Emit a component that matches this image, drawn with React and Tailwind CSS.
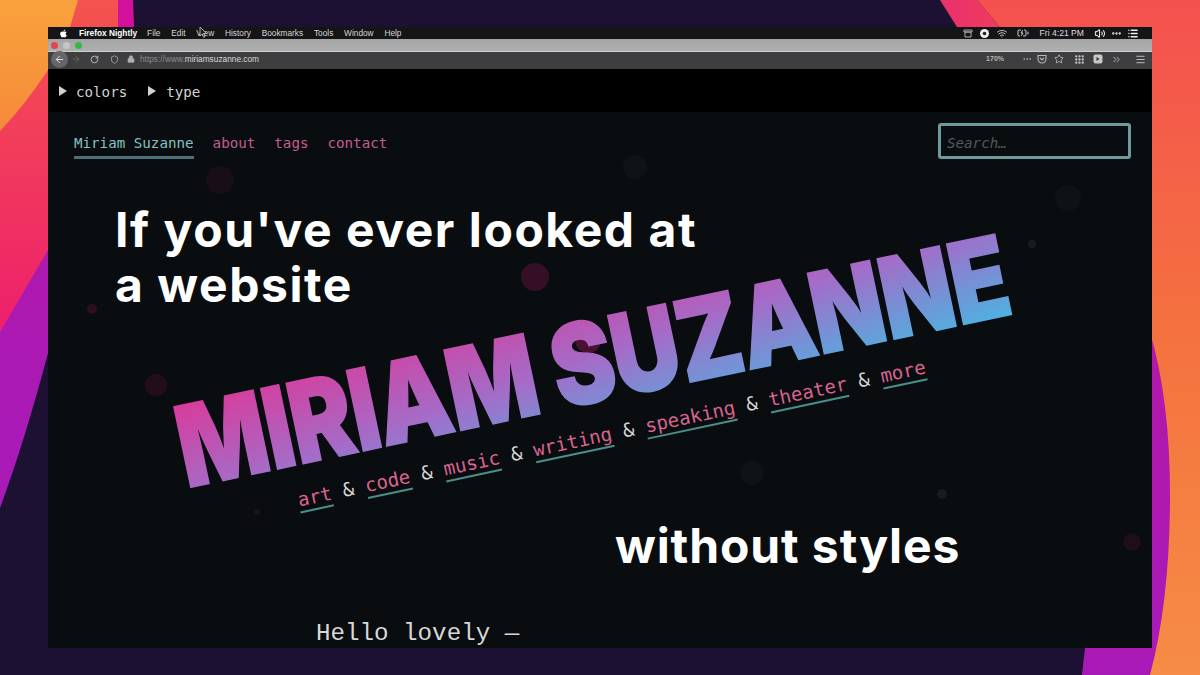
import React from "react";
import { ArrowLeft, ArrowRight, RotateCw, Shield, Lock, Star, Grip, ChevronsRight, Menu, Wifi, Volume2, Ellipsis, BatteryCharging, List } from "lucide-react";
import { FaApple } from "react-icons/fa";

function Wallpaper() {
  return (
    <svg className="absolute inset-0 w-[1200px] h-[675px]" viewBox="0 0 1200 675">
      <defs>
        <linearGradient id="orange" x1="0" y1="0" x2="0" y2="1">
          <stop offset="0" stopColor="#f9a23c" />
          <stop offset="1" stopColor="#f58a3a" />
        </linearGradient>
        <linearGradient id="red" x1="0" y1="0" x2="0" y2="1">
          <stop offset="0" stopColor="#f4534e" />
          <stop offset="1" stopColor="#ee1f6c" />
        </linearGradient>
        <linearGradient id="rightbg" x1="0" y1="0" x2="0" y2="1">
          <stop offset="0" stopColor="#f4514f" />
          <stop offset="0.5" stopColor="#f4723f" />
          <stop offset="1" stopColor="#f68c45" />
        </linearGradient>
        <linearGradient id="pinkred" x1="0" y1="0" x2="1" y2="0">
          <stop offset="0" stopColor="#e8316e" />
          <stop offset="1" stopColor="#f03a5c" />
        </linearGradient>
        <linearGradient id="purple" x1="0" y1="0" x2="0" y2="1">
          <stop offset="0" stopColor="#b318a8" />
          <stop offset="1" stopColor="#a81ab8" />
        </linearGradient>
      </defs>
      <rect width="1200" height="675" fill="#1d1133" />
      <path d="M0 100 L100 40 L48 353 Q25 440 0 508 Z" fill="url(#purple)" />
      <path d="M78 0 L118 0 L118 27 L100 60 L48 250 L0 332 L0 100 Z" fill="url(#red)" />
      <path d="M118 0 L133 0 L134 27 L118 27 Z" fill="#d3109c" />
      <path d="M0 0 L78 0 L70 27 L48 70 Q25 105 0 131 Z" fill="url(#orange)" />
      <path d="M940 0 L977 0 L1000 27 L957 27 Z" fill="url(#pinkred)" />
      <path d="M977 0 L1200 0 L1200 675 L1100 675 L1100 27 L1000 27 Z" fill="url(#rightbg)" />
      <path d="M1150 332 Q1170 400 1170 495 Q1170 600 1150 675 L1082 675 L1085 648 L1140 640 L1140 332 Z" fill="url(#purple)" />
    </svg>
  );
}

function MenuBar() {
  const items = ["File", "Edit", "View", "History", "Bookmarks", "Tools", "Window", "Help"];
  return (
    <div className="relative h-[12px] bg-[#151518] flex items-center text-[8.3px] text-[#d6d6d6] font-['Liberation_Sans',sans-serif]">
      <FaApple className="ml-[11px] w-[9px] h-[9px] text-white" />
      <span className="ml-[11px] font-bold text-white">Firefox Nightly</span>
      <div className="ml-[10px] flex gap-[10.8px]">
        {items.map((t) => <span key={t}>{t}</span>)}
      </div>
      <div className="ml-auto mr-[13px] flex items-center gap-[5px]">
        <svg width="10" height="9" viewBox="0 0 10 9" className="text-[#aaa]"><path d="M1 1h8v2H1zM2 3h6v5H2z" fill="none" stroke="currentColor" strokeWidth="1" /></svg>
        <svg className="ml-[2.5px]" width="9" height="9" viewBox="0 0 9 9"><circle cx="4.5" cy="4.5" r="4.5" fill="#eee" /><circle cx="4.5" cy="4.5" r="1.8" fill="#222" /></svg>
        <Wifi className="ml-[1.5px] w-[12px] h-[11px] text-[#ccc]" strokeWidth={2} />
        <BatteryCharging className="w-[14px] h-[12px] text-[#ccc] ml-[3px]" strokeWidth={2} />
        <span className="ml-[5px] text-[8.6px] font-medium text-[#dcdcdc]">Fri 4:21 PM</span>
        <Volume2 className="w-[12px] h-[11px] text-[#ddd] ml-[5px]" strokeWidth={2.4} />
        <Ellipsis className="w-[11px] h-[11px] text-[#eee]" strokeWidth={3} />
        <List className="w-[12px] h-[11px] text-[#eee]" strokeWidth={3} />
      </div>
    </div>
  );
}

function TitleBar() {
  return (
    <div className="h-[13px] bg-gradient-to-b from-[#a4a4a4] to-[#aeb0b0] border-b border-[#cfcfcf] flex items-center pl-[3px] gap-[5px]">
      <span className="w-[7px] h-[7px] rounded-full bg-[#e8424f]" />
      <span className="w-[7px] h-[7px] rounded-full bg-[#c6c6c6]" />
      <span className="w-[7px] h-[7px] rounded-full bg-[#39b54a]" />
    </div>
  );
}

function ToolBar() {
  return (
    <div className="h-[17px] bg-[#3e3e41] flex items-center pb-[3px] text-[8px] text-[#9a9a9a] font-['Liberation_Sans',sans-serif]">
      <span className="ml-[3px] w-[17px] h-[17px] rounded-full bg-[#66666a] flex items-center justify-center mt-[1px]">
        <ArrowLeft className="w-[11px] h-[11px] text-[#e8e8e8]" strokeWidth={2} />
      </span>
      <ArrowRight className="ml-[3px] w-[10px] h-[10px] text-[#6a6a6a]" />
      <RotateCw className="ml-[9px] w-[9px] h-[9px] text-[#c8c8c8]" strokeWidth={2.2} />
      <Shield className="ml-[11px] w-[9px] h-[9px] text-[#b0b0b0]" strokeWidth={2} />
      <Lock className="ml-[8px] w-[8px] h-[8px] text-[#b0b0b0] fill-[#b0b0b0]" />
      <span className="ml-[5px] text-[8.3px] text-[#8a8a8a]">https://www.<span className="text-[#d8d8d8]">miriamsuzanne.com</span></span>
      <div className="ml-auto mr-[6px] flex items-center">
        <span className="text-[7px] font-bold text-[#b5b5b5]">170%</span>
        <Ellipsis className="ml-[18px] w-[10px] h-[10px] text-[#a0a0a0]" strokeWidth={2.4} />
        <svg className="ml-[5px] text-[#b8b8b8]" width="10" height="10" viewBox="0 0 10 10"><path d="M1 1.5h8v3.5a4 4 0 0 1-8 0zM3 4l2 2 2-2" fill="none" stroke="currentColor" strokeWidth="1.1" /></svg>
        <Star className="ml-[7px] w-[10px] h-[10px] text-[#c0c0c0]" strokeWidth={2} />
        <Grip className="ml-[10px] w-[11px] h-[11px] text-[#d0d0d0]" strokeWidth={3} />
        <svg className="ml-[8px]" width="10" height="10" viewBox="0 0 10 10"><rect x="0.5" y="0.5" width="9" height="9" rx="2" fill="#c8c8c8" /><path d="M3.5 3l3 2-3 2z" fill="#333" /></svg>
        <ChevronsRight className="ml-[8px] w-[11px] h-[11px] text-[#b8b8b8]" strokeWidth={2} />
        <Menu className="ml-[13px] w-[11px] h-[11px] text-[#c8c8c8]" strokeWidth={2} />
      </div>
    </div>
  );
}

const dots = [
  { x: 487, y: 208, r: 14, c: "bg-[#340f26]" },
  { x: 172, y: 111, r: 14, c: "bg-[#1a0e16]" },
  { x: 108, y: 316, r: 11, c: "bg-[#240d1b]" },
  { x: 44, y: 240, r: 5, c: "bg-[#2b0f20]" },
  { x: 984, y: 175, r: 4, c: "bg-[#1a1d20]" },
  { x: 704, y: 404, r: 12, c: "bg-[#101316]" },
  { x: 1020, y: 129, r: 13, c: "bg-[#0f1215]" },
  { x: 1084, y: 473, r: 9, c: "bg-[#1e0e18]" },
  { x: 894, y: 425, r: 5, c: "bg-[#181b1e]" },
  { x: 587, y: 98, r: 12, c: "bg-[#101316]" },
  { x: 209, y: 443, r: 3, c: "bg-[#1e0f1a]" },
];

function Logo() {
  return (
    <svg className="absolute left-0 top-0" width="1104" height="579" viewBox="0 0 1104 579">
      <defs>
        <linearGradient id="logo" gradientUnits="userSpaceOnUse" x1="-510" y1="-42" x2="-491" y2="143">
          <stop offset="0" stopColor="#d83c9c" />
          <stop offset="0.5" stopColor="#a46cc8" />
          <stop offset="1" stopColor="#50b0e0" />
        </linearGradient>
      </defs>
      <circle cx="540" cy="271" r="13" fill="#4a1232" />
      <text
        transform="translate(544 292) rotate(-11.9) scale(.832 1)"
        y="41"
        textAnchor="middle"
        fontFamily="Inter, sans-serif"
        fontWeight="900"
        fontSize="113"
        letterSpacing="-1.5"
        fill="url(#logo)"
        stroke="url(#logo)"
        strokeWidth="1.5"
      >MIRIAM SUZANNE</text>
    </svg>
  );
}

function Page() {
  const links = ["art", "code", "music", "writing", "speaking", "theater", "more"];
  return (
    <div className="relative flex-1 overflow-hidden bg-[#0a0d10] font-['DejaVu_Sans_Mono',monospace]">
      {dots.map((d, i) => (
        <span key={i} className={`absolute rounded-full ${d.c}`} style={{ left: d.x - d.r, top: d.y - d.r, width: d.r * 2, height: d.r * 2 }} />
      ))}
      <div className="relative h-[43px] bg-black flex items-center pl-[11px] pt-[5px] text-[14.2px] text-[#d2d2d2]">
        <span className="flex items-center gap-[9px]">
          <span className="w-0 h-0 border-y-[5px] border-y-transparent border-l-[8px] border-l-[#d2d2d2] -mt-[3px]" />colors
        </span>
        <span className="ml-[21px] flex items-center gap-[10px]">
          <span className="w-0 h-0 border-y-[5px] border-y-transparent border-l-[8px] border-l-[#d2d2d2] -mt-[3px]" />type
        </span>
      </div>
      <header className="relative flex items-start justify-between pl-[26px] pr-[21px] pt-[11px] text-[14.2px]">
        <nav className="flex gap-[19px] pt-[10px] text-[#c45d8f]">
          <span className="text-[#86c0c0] border-b-[3px] border-[#4d6f78] pb-[5px] h-[26px]">Miriam Suzanne</span>
          <span>about</span>
          <span>tags</span>
          <span>contact</span>
        </nav>
        <div className="w-[193px] h-[36px] border-[3px] border-[#6f9a9c] rounded-[3px] bg-[#0a0d10] flex items-center pl-[6px] pt-[6px] text-[14.2px] italic text-[#4f5a5d]">Search…</div>
      </header>
      <h1 className="relative ml-[67px] mt-[43px] text-[48px] tracking-[1.55px] leading-[55px] font-bold text-white font-['Inter',sans-serif]">If you've ever looked at<br />a website</h1>
      <p className="relative ml-[567px] mt-[206px] text-[48px] tracking-[0.9px] leading-[55px] font-bold text-white font-['Inter',sans-serif]">without styles</p>
      <p className="relative ml-[268px] mt-[46px] text-[24.2px] leading-[30px] text-[#d8d8d8] font-['Liberation_Mono',monospace]">Hello lovely —</p>

      <Logo />
      <div className="absolute left-[564px] top-[365px] w-0 h-0 flex items-center justify-center">
        <div className="shrink-0 whitespace-nowrap flex items-baseline gap-[11.5px] text-[19px] leading-[24px] text-[#d8d8d8] -rotate-12">
          {links.map((l, i) => (
            <React.Fragment key={l}>
              {i > 0 && <span>&amp;</span>}
              <span className="text-[#d9638f] border-b-[2.5px] border-[#4a8f8c]">{l}</span>
            </React.Fragment>
          ))}
        </div>
      </div>
    </div>
  );
}

export default function App() {
  return (
    <div className="relative w-[1200px] h-[675px] overflow-hidden bg-[#1d1133]">
      <Wallpaper />
      <div className="relative mx-[48px] mt-[27px] h-[621px] w-[1104px] flex flex-col">
        <MenuBar />
        <TitleBar />
        <ToolBar />
        <Page />
      </div>
      <svg className="absolute left-[199px] top-[27px]" width="8" height="11" viewBox="0 0 8 11"><path d="M1 0v9l2.2-2 1.5 3.4 1.3-.6L4.5 6.5H7.5z" fill="#222" stroke="#ddd" strokeWidth=".7" /></svg>
    </div>
  );
}
